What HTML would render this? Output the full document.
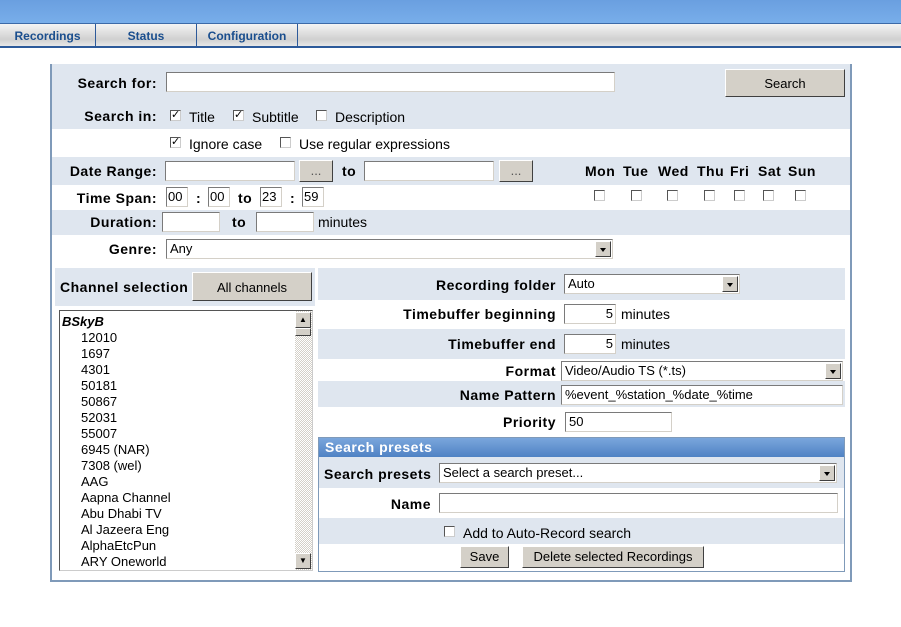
<!DOCTYPE html>
<html><head><meta charset="utf-8"><style>
*{box-sizing:border-box;margin:0;padding:0}
body{width:901px;height:627px;background:#fff;font-family:"Liberation Sans",sans-serif;font-size:14px;color:#000;position:relative;overflow:hidden}
.a{position:absolute;white-space:nowrap}
.b{font-weight:bold;letter-spacing:0.5px}
.blue{background:#dfe6ef}
.in{position:absolute;background:#fff;border:1px solid #7a7a7a;border-right-color:#d4d0c8;border-bottom-color:#d4d0c8;font-size:13px;padding-left:3px;line-height:17px;height:20px;white-space:nowrap}
.btn{position:absolute;background:#d4d0c8;border:1px solid;border-color:#fff #404040 #404040 #fff;text-align:center;font-size:13px;color:#000}
.cb{position:absolute;width:11px;height:11px;border:1px solid #555;border-right-color:#ccc;border-bottom-color:#ccc;background:#fff;font-size:11px;line-height:9px;text-align:center}
.dd{position:absolute;right:1px;top:1px;width:16px;bottom:1px;background:#d4d0c8;border:1px solid;border-color:#fff #404040 #404040 #fff}
.dd:after{content:"";position:absolute;left:4px;top:6px;border:3px solid transparent;border-top:4px solid #000}
.r{text-align:right}
.lst div{height:16px;line-height:16px;padding-left:21px;font-size:13px}
</style></head><body>
<div class="a" style="left:0;top:0;width:901px;height:23px;background:linear-gradient(#6a9fe0,#78aeea)"></div>
<div class="a" style="left:0;top:23px;width:901px;height:25px;background:linear-gradient(#f4f4f4,#d0d0d0 70%,#e8e8e8);border-top:1px solid #3c6aa8;border-bottom:2px solid #2d5a9a"></div>
<div class="a" style="left:0;top:24px;width:96px;height:22px;line-height:24px;text-align:center;color:#1a4e8e;font-size:12px;font-weight:bold;border-right:1px solid #2d5a9a">Recordings</div>
<div class="a" style="left:96px;top:24px;width:101px;height:22px;line-height:24px;text-align:center;color:#1a4e8e;font-size:12px;font-weight:bold;border-right:1px solid #2d5a9a">Status</div>
<div class="a" style="left:197px;top:24px;width:101px;height:22px;line-height:24px;text-align:center;color:#1a4e8e;font-size:12px;font-weight:bold;border-right:1px solid #2d5a9a">Configuration</div>

<div class="a" style="left:50px;top:64px;width:802px;height:518px;border-left:2px solid #7f9ab9;border-right:2px solid #7f9ab9;border-bottom:2px solid #7f9ab9"></div>
<div class="a blue" style="left:52px;top:64px;width:798px;height:65px"></div>
<div class="a blue" style="left:52px;top:157px;width:798px;height:28px"></div>
<div class="a blue" style="left:52px;top:210px;width:798px;height:25px"></div>

<div class="a b r" style="left:52px;top:75px;width:105px">Search for:</div>
<div class="in" style="left:166px;top:72px;width:449px"></div>
<div class="btn" style="left:725px;top:69px;width:120px;height:28px;line-height:28px">Search</div>

<div class="a b r" style="left:52px;top:108px;width:105px">Search in:</div>
<div class="cb" style="left:170px;top:110px">✓</div><div class="a" style="left:189px;top:109px">Title</div>
<div class="cb" style="left:233px;top:110px">✓</div><div class="a" style="left:252px;top:109px">Subtitle</div>
<div class="cb" style="left:316px;top:110px"></div><div class="a" style="left:335px;top:109px">Description</div>

<div class="cb" style="left:170px;top:137px">✓</div><div class="a" style="left:189px;top:136px">Ignore case</div>
<div class="cb" style="left:280px;top:137px"></div><div class="a" style="left:299px;top:136px">Use regular expressions</div>

<div class="a b r" style="left:52px;top:163px;width:105px">Date Range:</div>
<div class="in" style="left:165px;top:161px;width:130px"></div>
<div class="btn" style="left:299px;top:160px;width:34px;height:22px;line-height:20px;color:#555">...</div>
<div class="a b" style="left:342px;top:163px">to</div>
<div class="in" style="left:364px;top:161px;width:130px"></div>
<div class="btn" style="left:499px;top:160px;width:34px;height:22px;line-height:20px;color:#555">...</div>
<div class="a b" style="left:585px;top:163px">Mon</div><div class="a b" style="left:623px;top:163px">Tue</div><div class="a b" style="left:658px;top:163px">Wed</div><div class="a b" style="left:697px;top:163px">Thu</div><div class="a b" style="left:730px;top:163px">Fri</div><div class="a b" style="left:758px;top:163px">Sat</div><div class="a b" style="left:788px;top:163px">Sun</div>
<div class="cb" style="left:594px;top:190px"></div><div class="cb" style="left:631px;top:190px"></div><div class="cb" style="left:667px;top:190px"></div><div class="cb" style="left:704px;top:190px"></div><div class="cb" style="left:734px;top:190px"></div><div class="cb" style="left:763px;top:190px"></div><div class="cb" style="left:795px;top:190px"></div>

<div class="a b r" style="left:52px;top:190px;width:105px">Time Span:</div>
<div class="in" style="left:166px;top:187px;width:22px;padding-left:1px">00</div>
<div class="a b" style="left:196px;top:190px">:</div>
<div class="in" style="left:208px;top:187px;width:22px;padding-left:1px">00</div>
<div class="a b" style="left:238px;top:190px">to</div>
<div class="in" style="left:260px;top:187px;width:22px;padding-left:1px">23</div>
<div class="a b" style="left:290px;top:190px">:</div>
<div class="in" style="left:302px;top:187px;width:22px;padding-left:1px">59</div>

<div class="a b r" style="left:52px;top:214px;width:105px">Duration:</div>
<div class="in" style="left:162px;top:212px;width:58px"></div>
<div class="a b" style="left:232px;top:214px">to</div>
<div class="in" style="left:256px;top:212px;width:58px"></div>
<div class="a" style="left:318px;top:214px">minutes</div>

<div class="a b r" style="left:52px;top:241px;width:105px">Genre:</div>
<div class="in" style="left:166px;top:239px;width:447px">Any<div class="dd"></div></div>

<div class="a blue" style="left:55px;top:268px;width:260px;height:38px"></div>
<div class="a b" style="left:60px;top:279px">Channel selection</div>
<div class="btn" style="left:192px;top:272px;width:120px;height:29px;line-height:30px">All channels</div>
<div class="a lst" style="left:59px;top:310px;width:254px;height:261px;border:1px solid #555;border-right-color:#ccc;border-bottom-color:#ccc;background:#fff;padding-top:3px;overflow:hidden">
<div style="padding-left:2px;font-style:italic;font-weight:bold">BSkyB</div><div>12010</div><div>1697</div><div>4301</div><div>50181</div><div>50867</div><div>52031</div><div>55007</div><div>6945 (NAR)</div><div>7308 (wel)</div><div>AAG</div><div>Aapna Channel</div><div>Abu Dhabi TV</div><div>Al Jazeera Eng</div><div>AlphaEtcPun</div><div>ARY Oneworld</div>
<div class="a" style="right:0;top:0;width:17px;height:259px;background:repeating-conic-gradient(#d4d0c8 0 25%,#fff 0 50%) 0 0/2px 2px;padding:0"></div>
<div class="btn" style="right:1px;top:1px;width:16px;height:16px;padding:0;font-size:8px;line-height:14px">▲</div>
<div class="btn" style="right:1px;top:17px;width:16px;height:8px;padding:0"></div>
<div class="btn" style="right:1px;bottom:1px;width:16px;height:16px;padding:0;font-size:8px;line-height:14px">▼</div>
</div>

<div class="a blue" style="left:318px;top:268px;width:527px;height:32px"></div>
<div class="a blue" style="left:318px;top:329px;width:527px;height:30px"></div>
<div class="a blue" style="left:318px;top:381px;width:527px;height:26px"></div>
<div class="a b r" style="left:318px;top:277px;width:238px">Recording folder</div>
<div class="in" style="left:564px;top:274px;width:176px">Auto<div class="dd"></div></div>
<div class="a b r" style="left:318px;top:306px;width:238px">Timebuffer beginning</div>
<div class="in r" style="left:564px;top:304px;width:52px;padding-right:2px">5</div><div class="a" style="left:621px;top:306px">minutes</div>
<div class="a b r" style="left:318px;top:336px;width:238px">Timebuffer end</div>
<div class="in r" style="left:564px;top:334px;width:52px;padding-right:2px">5</div><div class="a" style="left:621px;top:336px">minutes</div>
<div class="a b r" style="left:318px;top:363px;width:238px">Format</div>
<div class="in" style="left:561px;top:361px;width:282px">Video/Audio TS (*.ts)<div class="dd"></div></div>
<div class="a b r" style="left:318px;top:387px;width:238px">Name Pattern</div>
<div class="in" style="left:561px;top:385px;width:282px">%event_%station_%date_%time</div>
<div class="a b r" style="left:318px;top:414px;width:238px">Priority</div>
<div class="in" style="left:565px;top:412px;width:107px">50</div>

<div class="a" style="left:318px;top:437px;width:527px;height:135px;border:1px solid #7f9ab9;background:#fff"></div>
<div class="a b" style="left:319px;top:438px;width:525px;height:19px;background:linear-gradient(#7aa6dc,#4f82c4);color:#fff;padding-left:6px;line-height:19px">Search presets</div>
<div class="a blue" style="left:319px;top:457px;width:525px;height:31px"></div>
<div class="a blue" style="left:319px;top:518px;width:525px;height:26px"></div>
<div class="a b" style="left:324px;top:466px">Search presets</div>
<div class="in" style="left:439px;top:463px;width:398px">Select a search preset...<div class="dd"></div></div>
<div class="a b r" style="left:319px;top:496px;width:112px">Name</div>
<div class="in" style="left:439px;top:493px;width:399px"></div>
<div class="cb" style="left:444px;top:526px"></div><div class="a" style="left:463px;top:525px">Add to Auto-Record search</div>
<div class="btn" style="left:460px;top:546px;width:49px;height:22px;line-height:20px">Save</div>
<div class="btn" style="left:522px;top:546px;width:182px;height:22px;line-height:20px">Delete selected Recordings</div>
</body></html>
